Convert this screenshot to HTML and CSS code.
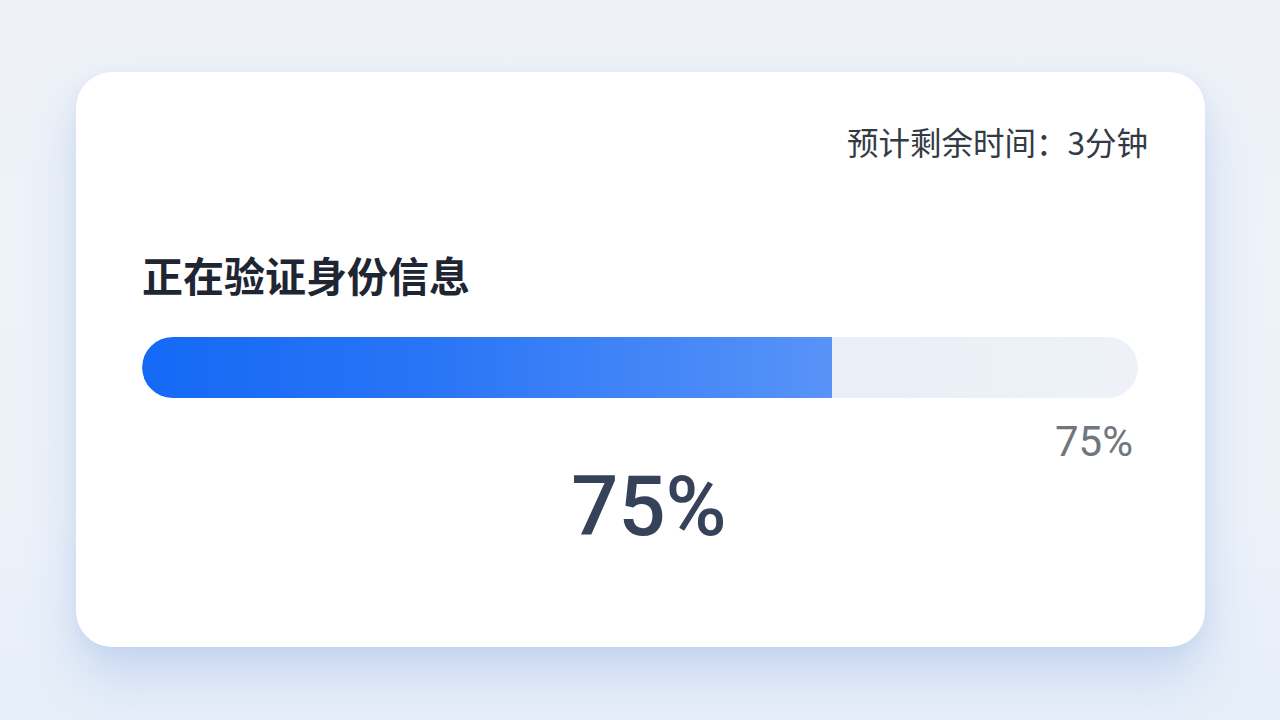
FILE: index.html
```html
<!DOCTYPE html>
<html lang="zh-CN">
<head>
<meta charset="utf-8">
<title>验证进度</title>
<link rel="stylesheet" href="styles.css">
</head>
<body>
  <main class="stage">
    <section class="card">
      <div class="eta">预计剩余时间：3分钟</div>
      <h1 class="title">正在验证身份信息</h1>
      <div class="track">
        <div class="fill" style="width: 69.3%"></div>
      </div>
      <div class="pct-small">75%</div>
      <div class="pct-big">75%</div>
    </section>
  </main>
</body>
</html>
```

FILE: styles.css
```css
* { box-sizing: border-box; }

html, body {
  margin: 0;
  height: 100%;
}

body {
  background: linear-gradient(180deg, #eef2f8 0%, #edf2f9 70%, #e6eef9 100%);
  font-family: "Noto Sans CJK SC", "Noto Sans", sans-serif;
  overflow: hidden;
}

.stage {
  padding: 72px 75px 0 76px;
}

.card {
  width: 1129px;
  height: 575px;
  background: #ffffff;
  border-radius: 36px;
  box-shadow: 0 28px 50px rgba(120, 160, 225, 0.3), 0 4px 14px rgba(150, 175, 215, 0.12);
  padding: 48px 67px 0 66px;
  display: flex;
  flex-direction: column;
}

.eta {
  align-self: flex-end;
  margin-right: -10px;
  font-size: 31.5px;
  line-height: 42px;
  color: #343a44;
}

.title {
  margin: 86px 0 0 0;
  font-size: 41px;
  line-height: 52px;
  font-weight: 700;
  color: #1f2633;
}

.track {
  margin-top: 37px;
  height: 61px;
  border-radius: 31px;
  background: linear-gradient(90deg, #dfe8f6 0%, #eef2f8 100%);
  overflow: hidden;
}

.fill {
  height: 100%;
  border-radius: 31px 0 0 31px;
  background: linear-gradient(90deg, #1569f5 0%, #2874f6 40%, #5893f8 100%);
}

.pct-small {
  align-self: flex-end;
  margin: 20px 5px 0 0;
  font-family: Roboto, "Liberation Sans", sans-serif;
  font-size: 42px;
  line-height: 48px;
  color: #71767e;
}

.pct-big {
  align-self: center;
  margin: -7px 0 0 18px;
  font-family: Roboto, "Liberation Sans", sans-serif;
  font-size: 83px;
  line-height: 96px;
  font-weight: 500;
  color: #36425a;
}
```
